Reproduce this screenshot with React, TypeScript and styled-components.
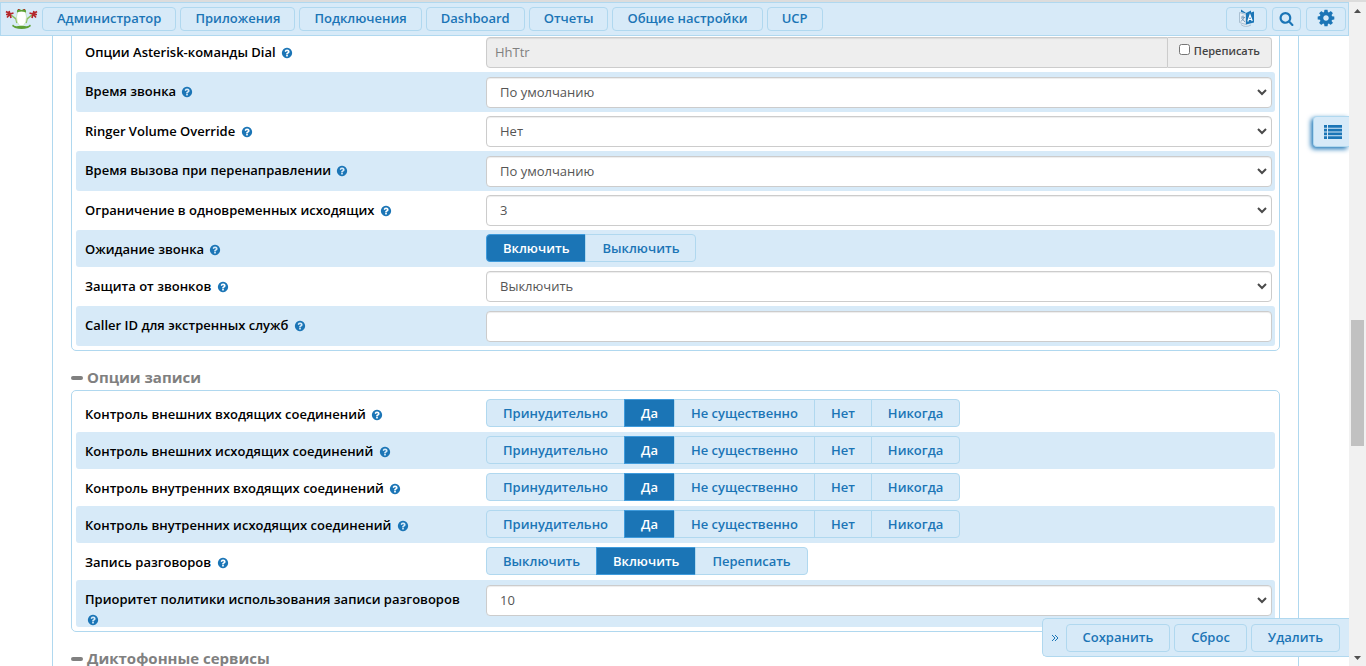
import React from "react";
import styled, { createGlobalStyle } from "styled-components";

const blue = "#1b75b6";
const pale = "#d7eaf8";
const line = "#b0d8ef";

const Global = createGlobalStyle`
  * { box-sizing: border-box; }
  body { margin: 0; background: #fff; font-family: "Open Sans", "Noto Sans", sans-serif; font-size: 13px; color: #000; }
  button, input, select { font-family: inherit; font-size: 13px; margin: 0; }
`;

const Page = styled.div`
  display: flex;
  flex-direction: column;
  height: 100vh;
  overflow: hidden;
  border-top: 2px solid #dcdcdc;
`;
const Body = styled.div`
  flex: 1;
  min-height: 0;
  display: flex;
`;
const Main = styled.div`
  position: relative;
  flex: 1;
  min-width: 0;
  display: flex;
  flex-direction: column;
`;
const Header = styled.header`
  flex: none;
  height: 34px;
  display: flex;
  align-items: center;
  justify-content: space-between;
  padding: 0 2px 0 4px;
  background: ${pale};
  border: 1px solid ${line};
`;
const Nav = styled.nav`
  display: flex;
  align-items: center;
  gap: 4px;
`;
const Tools = styled.div`
  display: flex;
  gap: 5px;
`;
const Button = styled.button<{ $pad?: number; $h?: number }>`
  display: inline-flex;
  align-items: center;
  justify-content: center;
  height: ${(p) => p.$h ?? 24}px;
  padding: 0 ${(p) => p.$pad ?? 14}px 2px;
  border: 1px solid ${line};
  border-radius: 4px;
  background: ${pale};
  color: ${blue};
  font-weight: 600;
  line-height: 18px;
  white-space: nowrap;
`;
const Scroll = styled.main`
  flex: 1;
  min-height: 0;
  overflow: hidden;
`;
const Panel = styled.div`
  margin: -8px 50px 0 52px;
  padding: 0 18px 40px;
  border: solid ${line};
  border-width: 0 1px;
`;
const Group = styled.section`
  padding: 4px;
  border: 1px solid ${line};
  border-radius: 5px;
`;
const Heading = styled.h2`
  display: flex;
  align-items: center;
  gap: 4px;
  margin: 16px 0 2px;
  font-size: 15px;
  line-height: 21px;
  font-weight: 700;
  color: #808080;
`;
const Dash = styled.span`
  width: 12px;
  height: 4px;
  border-radius: 2px;
  background: #808080;
`;
const Control = styled.div`
  flex: 1;
  min-width: 0;
  display: flex;
`;
const Row = styled.div<{ $shaded?: boolean; $toggle?: boolean }>`
  display: flex;
  align-items: flex-start;
  min-height: ${(p) => (p.$toggle ? 37 : p.$shaded ? 40 : 39)}px;
  padding: 4px 3px 0 0;
  border-radius: 3px;
  background: ${(p) => (p.$shaded ? pale : "transparent")};
  ${Control} { padding-top: ${(p) => (p.$shaded && !p.$toggle ? 1 : 0)}px; }
`;
const LabelCell = styled.div`
  flex: 0 0 410px;
  margin-bottom: -2px;
  padding: 5px 14px 0 9px;
  line-height: 20px;
  font-weight: 600;
`;
const Help = styled.svg`
  width: 12px;
  height: 12px;
  margin-left: 2px;
  vertical-align: -2px;
  fill: ${blue};
`;
const SelectBox = styled.div`
  position: relative;
  flex: 1;
`;
const Select = styled.select`
  display: block;
  width: 100%;
  height: 31px;
  padding: 0 13px 2px;
  border: 1px solid #ccc;
  border-radius: 4px;
  background: #fff;
  box-shadow: inset 0 1px 1px rgba(0, 0, 0, 0.075);
  color: #555;
  appearance: none;
`;
const Chevron = styled.svg`
  position: absolute;
  top: 12px;
  right: 5px;
  width: 10px;
  height: 7px;
  fill: none;
  stroke: #4a4a4a;
  stroke-width: 2;
  pointer-events: none;
`;
const Text = styled.input<{ $joined?: boolean }>`
  flex: 1;
  min-width: 0;
  height: 31px;
  padding: 0 8px 2px;
  border: 1px solid #ccc;
  border-radius: ${(p) => (p.$joined ? "4px 0 0 4px" : "4px")};
  background: #fff;
  box-shadow: inset 0 1px 1px rgba(0, 0, 0, 0.075);
  color: #555;
  &:disabled { background: #eee; color: #808080; }
`;
const Addon = styled.label`
  display: flex;
  align-items: center;
  gap: 4px;
  height: 31px;
  padding: 0 11px 4px;
  border: 1px solid #ccc;
  border-left: 0;
  border-radius: 0 4px 4px 0;
  background: #eee;
  color: #444;
  font-size: 11px;
  font-weight: 600;
  input { width: 11px; height: 11px; margin-bottom: 3px; }
`;
const Toggles = styled.div`
  display: flex;
`;
const Toggle = styled.label<{ $on?: boolean }>`
  display: flex;
  align-items: center;
  height: 28px;
  padding: 0 16px;
  border: 1px solid ${(p) => (p.$on ? "#3f9bdc" : line)};
  background: ${(p) => (p.$on ? blue : pale)};
  color: ${(p) => (p.$on ? "#fff" : blue)};
  font-weight: 600;
  & + & { margin-left: -1px; }
  &:first-child { border-radius: 4px 0 0 4px; }
  &:last-child { border-radius: 0 4px 4px 0; }
  input { position: absolute; opacity: 0; width: 1px; height: 1px; }
`;
const SideTab = styled.button`
  position: absolute;
  top: 114px;
  right: 0;
  width: 36px;
  height: 31px;
  padding: 0 0 0 2px;
  display: flex;
  align-items: center;
  justify-content: center;
  border: 1px solid ${line};
  border-right: 0;
  border-radius: 4px 0 0 4px;
  background: ${pale};
  box-shadow: -2px 2px 5px ${blue};
  clip-path: inset(-8px 0 -8px -8px);
  color: ${blue};
`;
const ActionBar = styled.div`
  position: absolute;
  right: 0;
  bottom: 9px;
  display: flex;
  align-items: center;
  gap: 4px;
  height: 39px;
  padding: 0 9px 0 5px;
  border: 1px solid ${line};
  border-right: 0;
  border-radius: 5px 0 0 5px;
  background: ${pale};
`;
const Collapse = styled.button`
  display: flex;
  align-items: center;
  justify-content: center;
  width: 14px;
  height: 28px;
  padding: 0;
  border: 0;
  background: none;
  color: ${blue};
`;
const Track = styled.div`
  flex: none;
  width: 17px;
  display: flex;
  flex-direction: column;
  align-items: center;
  background: #f1f1f1;
`;
const Arrow = styled.svg`
  flex: none;
  width: 17px;
  height: 17px;
  fill: #505050;
`;
const Thumb = styled.div`
  width: 13px;
  height: 19%;
  background: #c1c1c1;
`;
const Gap = styled.div<{ $grow: number }>`
  flex: ${(p) => p.$grow};
`;

const QMARK =
  "M1024 1376v-192q0-14-9-23t-23-9h-192q-14 0-23 9t-9 23v192q0 14 9 23t23 9h192q14 0 23-9t9-23zm256-672q0-88-55.5-163t-138.5-116-170-41q-243 0-371 213-15 24 8 42l132 100q7 6 19 6 16 0 25-12 53-68 86-92 34-24 86-24 48 0 85.5 26t37.5 59q0 38-20 61t-68 45q-63 28-115.5 86.5t-52.5 125.5v36q0 14 9 23t23 9h192q14 0 23-9t9-23q0-19 21.5-49.5t54.5-49.5q32-18 49-28.5t46-35 44.5-48 28-60.5 12.5-81zm384 192q0 209-103 385.5t-279.5 279.5-385.5 103-385.5-103-279.5-279.5-103-385.5 103-385.5 279.5-279.5 385.5-103 385.5 103 279.5 279.5 103 385.5z";
const SEARCH =
  "M1216 832q0-185-131.5-316.5t-316.5-131.5-316.5 131.5-131.5 316.5 131.5 316.5 316.5 131.5 316.5-131.5 131.5-316.5zm512 832q0 52-38 90t-90 38q-54 0-90-38l-343-342q-179 124-399 124-143 0-273.5-55.5t-225-150-150-225-55.5-273.5 55.5-273.5 150-225 225-150 273.5-55.5 273.5 55.5 225 150 150 225 55.5 273.5q0 220-124 399l343 343q37 37 37 90z";
const COG =
  "M1152 896q0-106-75-181t-181-75-181 75-75 181 75 181 181 75 181-75 75-181zm512-109v222q0 12-8 23t-20 13l-185 28q-19 54-39 91 35 50 107 138 10 12 10 25t-9 23q-27 37-99 108t-94 71q-12 0-26-9l-138-108q-44 23-91 38-16 136-29 186-7 28-36 28h-222q-14 0-24.5-8.5t-11.5-21.5l-28-184q-49-16-90-37l-141 107q-10 9-25 9-14 0-25-11-126-114-165-168-7-10-7-23 0-12 8-23 15-21 51-66.5t54-70.5q-27-50-41-99l-183-27q-13-2-21-12.5t-8-23.5v-222q0-12 8-23t19-13l186-28q14-46 39-92-40-57-107-138-10-12-10-24 0-10 9-23 26-36 98.5-107.5t94.5-71.5q13 0 26 10l138 107q44-23 91-38 16-136 29-186 7-28 36-28h222q14 0 24.5 8.5t11.5 21.5l28 184q49 16 90 37l142-107q9-9 24-9 13 0 25 10 129 119 165 170 7 8 7 22 0 12-8 23-15 21-51 66.5t-54 70.5q26 50 41 98l183 28q13 2 21 12.5t8 23.5z";

const Logo = () => (
  <svg width="33" height="22" viewBox="0 0 33 22" aria-label="FreePBX">
    <path d="M6 7 11 11 12 15M27 7 22 11 21 15" fill="none" stroke="#8cbf5e" strokeWidth="1.6" />
    <path d="M1 3.500 5 6 2 9.500M4 3 5 6 8.500 5M5 6 1 6.500M5 6 6 10M32 3.500 28 6 31 9.500M29 3 28 6 24.500 5M28 6 32 6.500M28 6 27 10" fill="none" stroke="#b5282c" strokeWidth="1.7" />
    <path d="M8 16.500q1.500 2.500 5 1.500h7q3.500 1 5-1.500l1 1.500-3 2q-6.500 2-13 0l-3-2z" fill="#5da035" />
    <path d="M12.500 4q4-2.500 8 0l1 5q0 6-3 8.500h-4q-3-2.500-3-8.500z" fill="#fff" stroke="#b8dc9c" strokeWidth=".6" />
    <path d="M12 4.500q-.5-3.500 2-3.500l2.500 1 2.500-1q2.500 0 2 3.500-4.500-2-9 0z" fill="#5da035" />
    <path d="M13 1.500h1.500M18.500 1.500H20" stroke="#b5282c" />
  </svg>
);

const Lang = () => (
  <svg width="17" height="18" viewBox="0 0 17 18" aria-hidden="true">
    <path d="M1.500 3.500 8 5.500V15.500L1.500 13.500zM3 15.500q4 3.500 10 .5" fill="#e6eff6" stroke="#9db4c8" strokeWidth=".8" />
    <path d="M3 8 7 8.500M5 6.500V8.500M6.500 8.500 3 12.500M3.500 9 7 13" stroke="#6d93b5" fill="none" strokeWidth=".9" />
    <path d="M3 .5 8 4 13 1.500 13 3.500 16 2.500V13.500L8 15.500V4.500L3 3z" fill={blue} />
    <path d="m9.800 12.500 2.200-6.500 2.200 6M10.700 10.500h2.800" stroke="#fff" fill="none" strokeWidth="1.200" />
  </svg>
);

type Field = {
  label: string;
  options?: string[];
  on?: number;
  value?: string;
  kind: "toggle" | "select" | "text" | "override";
};

const general: Field[] = [
  { label: "Опции Asterisk-команды Dial", kind: "override", value: "HhTtr" },
  { label: "Время звонка", kind: "select", value: "По умолчанию" },
  { label: "Ringer Volume Override", kind: "select", value: "Нет" },
  { label: "Время вызова при перенаправлении", kind: "select", value: "По умолчанию" },
  { label: "Ограничение в одновременных исходящих", kind: "select", value: "3" },
  { label: "Ожидание звонка", kind: "toggle", options: ["Включить", "Выключить"], on: 0 },
  { label: "Защита от звонков", kind: "select", value: "Выключить" },
  { label: "Caller ID для экстренных служб", kind: "text", value: "" },
];
const modes = ["Принудительно", "Да", "Не существенно", "Нет", "Никогда"];
const recording: Field[] = [
  { label: "Контроль внешних входящих соединений", kind: "toggle", options: modes, on: 1 },
  { label: "Контроль внешних исходящих соединений", kind: "toggle", options: modes, on: 1 },
  { label: "Контроль внутренних входящих соединений", kind: "toggle", options: modes, on: 1 },
  { label: "Контроль внутренних исходящих соединений", kind: "toggle", options: modes, on: 1 },
  { label: "Запись разговоров", kind: "toggle", options: ["Выключить", "Включить", "Переписать"], on: 1 },
  { label: "Приоритет политики использования записи разговоров", kind: "select", value: "10" },
];

const FieldRow = ({ field, id, shaded }: { field: Field; id: string; shaded: boolean }) => (
  <Row $shaded={shaded} $toggle={field.kind === "toggle"}>
    <LabelCell>
      <label htmlFor={field.kind === "toggle" ? `${id}-${field.on}` : id}>{field.label}</label>{" "}
      <Help viewBox="0 0 1792 1792" aria-hidden="true">
        <path d={QMARK} />
      </Help>
    </LabelCell>
    <Control>
      {field.kind === "toggle" && (
        <Toggles role="radiogroup" aria-label={field.label}>
          {field.options!.map((o, i) => (
            <Toggle key={o} $on={i === field.on}>
              <input type="radio" id={`${id}-${i}`} name={id} defaultChecked={i === field.on} />
              {o}
            </Toggle>
          ))}
        </Toggles>
      )}
      {field.kind === "select" && (
        <SelectBox>
          <Select id={id} defaultValue={field.value}>
            <option>{field.value}</option>
          </Select>
          <Chevron viewBox="0 0 10 7">
            <path d="M1 1 5 5 9 1" />
          </Chevron>
        </SelectBox>
      )}
      {field.kind === "text" && <Text id={id} type="text" />}
      {field.kind === "override" && (
        <>
          <Text id={id} type="text" $joined disabled defaultValue={field.value} />
          <Addon>
            <input type="checkbox" />
            Переписать
          </Addon>
        </>
      )}
    </Control>
  </Row>
);

const Title = ({ children }: { children: React.ReactNode }) => (
  <Heading>
    <Dash />
    {children}
  </Heading>
);

export default function App() {
  return (
    <Page>
      <Global />
      <Body>
        <Main>
          <Header>
            <Nav>
              <Logo />
              {["Администратор", "Приложения", "Подключения", "Dashboard", "Отчеты", "Общие настройки", "UCP"].map((t) => (
                <Button key={t} type="button">{t}</Button>
              ))}
            </Nav>
            <Tools>
              <Button type="button" $pad={11} aria-label="Язык"><Lang /></Button>
              <Button type="button" $pad={6} aria-label="Поиск">
                <svg width="15" height="15" viewBox="0 0 1792 1792" fill={blue}><path d={SEARCH} /></svg>
              </Button>
              <Button type="button" $pad={10} aria-label="Настройки">
                <svg width="18" height="18" viewBox="64 64 1664 1664" fill={blue}><path d={COG} /></svg>
              </Button>
            </Tools>
          </Header>
          <Scroll>
            <Panel>
              <Group>
                {general.map((f, i) => (
                  <FieldRow key={f.label} field={f} id={`general-${i}`} shaded={i % 2 === 1} />
                ))}
              </Group>
              <Title>Опции записи</Title>
              <Group>
                {recording.map((f, i) => (
                  <FieldRow key={f.label} field={f} id={`recording-${i}`} shaded={i % 2 === 1} />
                ))}
              </Group>
              <Title>Диктофонные сервисы</Title>
            </Panel>
          </Scroll>
          <SideTab type="button" aria-label="Список">
            <svg width="18" height="14" viewBox="0 0 18 15" preserveAspectRatio="none" fill={blue}>
              <path d="M0 0h3v3H0zM4 0h14v3H4zM0 4h3v3H0zM4 4h14v3H4zM0 8h3v3H0zM4 8h14v3H4zM0 12h3v3H0zM4 12h14v3H4z" />
            </svg>
          </SideTab>
          <ActionBar>
            <Collapse type="button" aria-label="Свернуть">
              <svg width="8" height="8" viewBox="0 0 8 8" fill="none" stroke={blue}>
                <path d="M1 1 4 4 1 7M4 1 7 4 4 7" />
              </svg>
            </Collapse>
            <Button type="button" $h={28} $pad={16}>Сохранить</Button>
            <Button type="button" $h={28} $pad={16}>Сброс</Button>
            <Button type="button" $h={28} $pad={16}>Удалить</Button>
          </ActionBar>
        </Main>
        <Track>
          <Arrow viewBox="0 0 17 17"><path d="M5 11 8.500 7 12 11z" /></Arrow>
          <Gap $grow={301} />
          <Thumb />
          <Gap $grow={203} />
          <Arrow viewBox="0 0 17 17"><path d="M5 7 8.500 11 12 7z" /></Arrow>
        </Track>
      </Body>
    </Page>
  );
}
